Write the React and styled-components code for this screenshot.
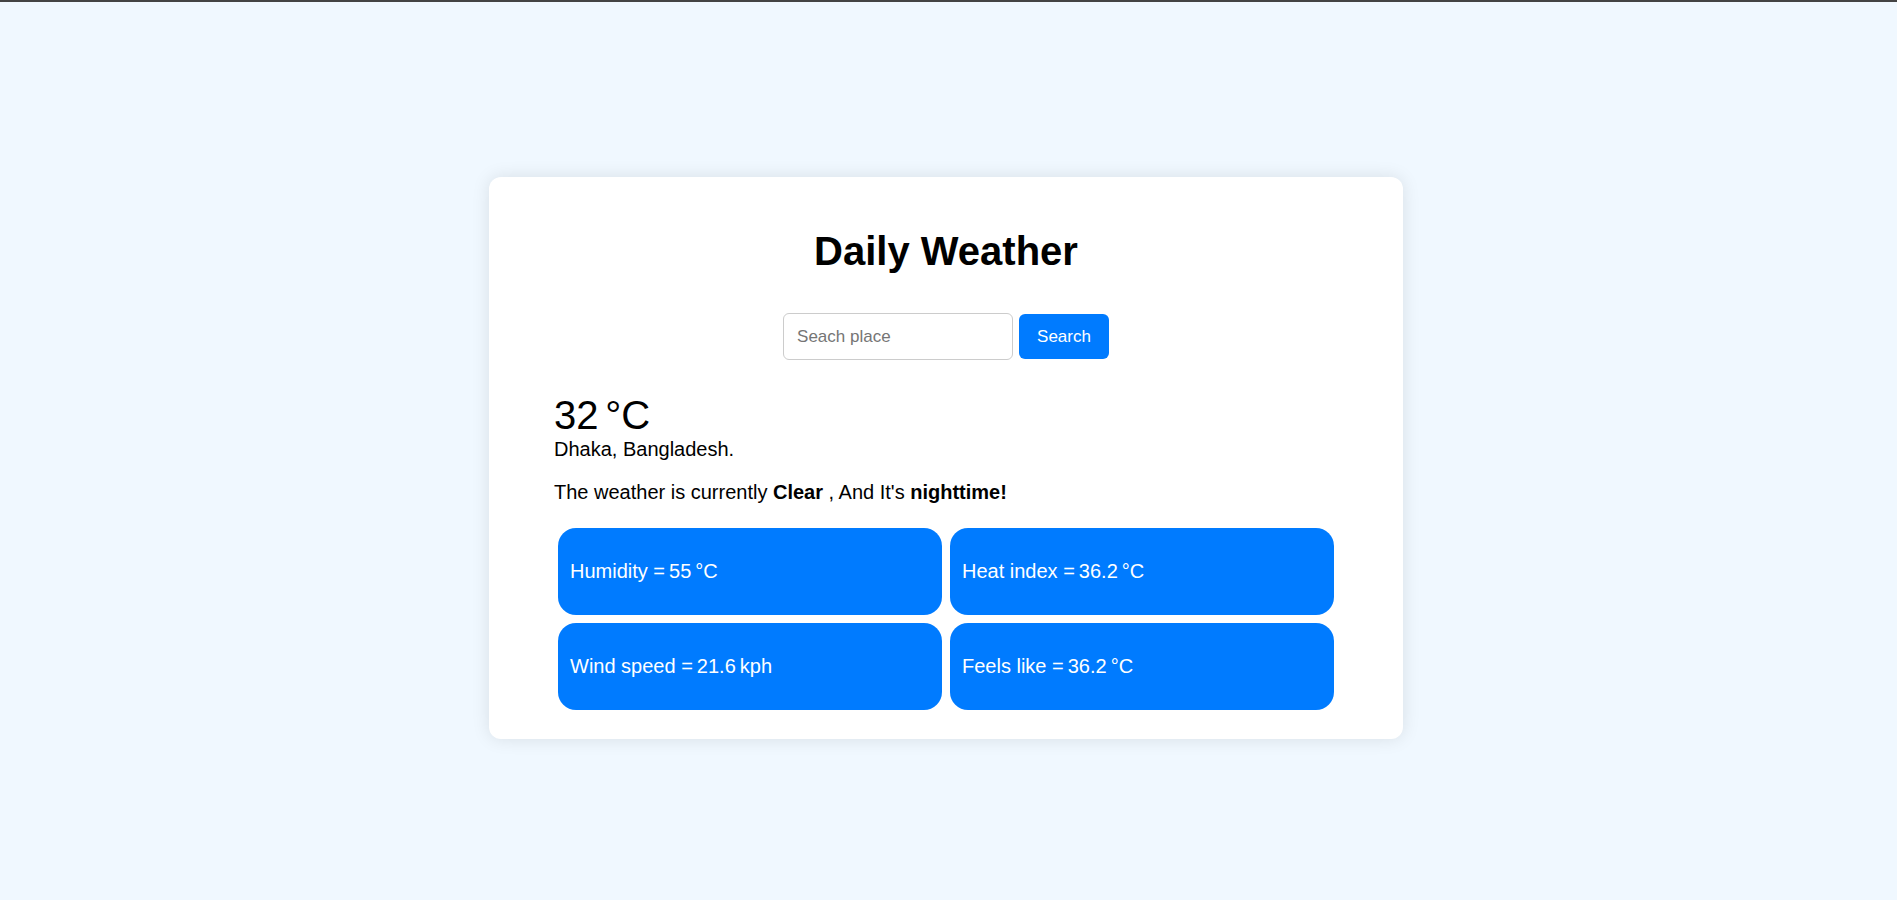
import React from "react";
import styled, { createGlobalStyle } from "styled-components";

const GlobalStyle = createGlobalStyle`
  *, *::before, *::after { box-sizing: border-box; }
  body {
    margin: 0;
    background: #f0f8ff;
    color: #000;
    font-family: "Liberation Sans", Arial, sans-serif;
    font-size: 20px;
    line-height: 23px;
  }
`;

const Page = styled.main`
  display: flex;
  align-items: center;
  justify-content: center;
  min-height: 100vh;
  padding: 14px 5px 0 0;
  border-top: 2px solid #444;
`;

const Card = styled.section`
  width: 100%;
  max-width: 914px;
  padding: 51px 65px 25px;
  background: #fff;
  border-radius: 12px;
  box-shadow: 0 0 18px rgba(0, 0, 0, 0.1);
`;

const Title = styled.h1`
  margin: 0 0 39px;
  font-size: 40px;
  line-height: 46px;
  text-align: center;
`;

const SearchForm = styled.form`
  display: flex;
  align-items: center;
  justify-content: center;
  gap: 6px;
  margin-bottom: 32px;
`;

const SearchInput = styled.input`
  width: 230px;
  height: 47px;
  padding: 0 13px;
  border: 1px solid #ccc;
  border-radius: 6px;
  font: 17px "Liberation Sans", Arial, sans-serif;

  &::placeholder { color: #757575; }
`;

const SearchButton = styled.button`
  height: 45px;
  padding: 0 18px;
  border: 0;
  border-radius: 6px;
  background: #007bff;
  color: #fff;
  font: 17px "Liberation Sans", Arial, sans-serif;
  cursor: pointer;
`;

const Temperature = styled.div`
  font-size: 40px;
  line-height: 46px;
`;

const Place = styled.div`
  margin-bottom: 20px;
`;

const Summary = styled.p`
  margin: 0 0 20px;
`;

const Readings = styled.div`
  display: grid;
  grid-template-columns: 1fr 1fr;
  gap: 8px;
  padding: 4px;
`;

const Reading = styled.div`
  padding: 32px 12px;
  border-radius: 18px;
  background: #007bff;
  color: #fff;
`;

const readings = [
  { label: "Humidity", value: "55\u2009°C" },
  { label: "Heat index", value: "36.2\u2009°C" },
  { label: "Wind speed", value: "21.6\u2009kph" },
  { label: "Feels like", value: "36.2\u2009°C" },
];

export default function App() {
  return (
    <>
      <GlobalStyle />
      <Page>
        <Card>
          <Title>Daily Weather</Title>
          <SearchForm onSubmit={(event) => event.preventDefault()}>
            <SearchInput type="text" aria-label="Search place" placeholder="Seach place" />
            <SearchButton type="submit">Search</SearchButton>
          </SearchForm>
          <Temperature>{"32\u2006°C"}</Temperature>
          <Place>Dhaka, Bangladesh.</Place>
          <Summary>
            The weather is currently <strong>Clear</strong> , And It's <strong>nighttime!</strong>
          </Summary>
          <Readings>
            {readings.map(({ label, value }) => (
              <Reading key={label}>{`${label} =\u2009${value}`}</Reading>
            ))}
          </Readings>
        </Card>
      </Page>
    </>
  );
}
